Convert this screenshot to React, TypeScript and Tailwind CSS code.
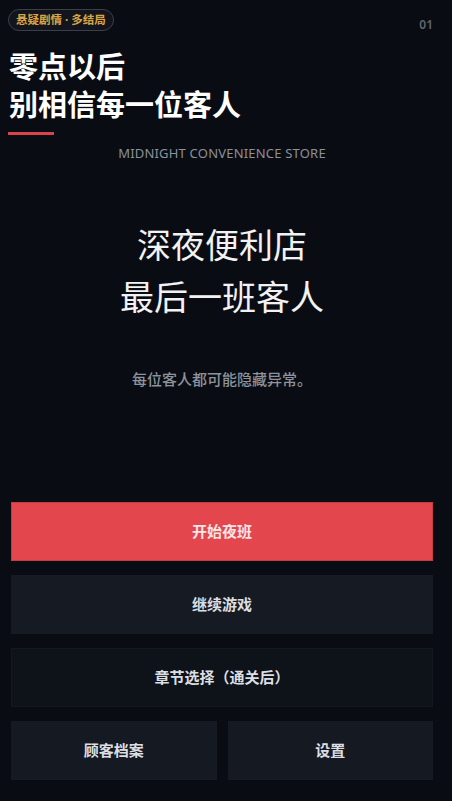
import React from 'react';

const font = { fontFamily: '"Noto Sans", "Noto Sans CJK SC", sans-serif' };

const Btn = ({ label, className }: { label: string; className: string }) => (
  <button className={`h-[59px] w-full flex items-center justify-center text-[15px] font-semibold ${className}`}>
    {label}
  </button>
);

export default function App() {
  return (
    <div style={font} className="w-[452px] h-[801px] bg-[#0a0c13] overflow-hidden flex flex-col pl-[8px] pr-[19px]">
      <div className="flex items-start justify-between pt-[9px]">
        <span className="h-[22px] px-[7px] flex items-center rounded-full border border-[#3b3f48] bg-[#12151d] text-[11.5px] font-bold text-[#d9a544]">
          <span>悬疑剧情</span>
          <span className="mx-[3px]">·</span>
          <span>多结局</span>
        </span>
        <span className="mt-[7px] text-[12px] font-semibold text-[#5f6570]">01</span>
      </div>

      <h1 className="mt-[14px] pl-[1px] text-[29px] leading-[38px] font-bold text-white">
        零点以后<br />别相信每一位客人
      </h1>
      <div className="mt-[8px] w-[46px] h-[3px] bg-[#d9434a]" />

      <p className="mt-[9px] pl-[3px] text-center text-[13px] tracking-[0.2px] text-[#8b919b]">MIDNIGHT CONVENIENCE STORE</p>

      <div className="mt-[55px] pl-[3px] text-center text-[34px] leading-[52px] text-[#f2f2f2]">
        深夜便利店<br />最后一班客人
      </div>

      <p className="mt-[45px] pl-[3px] text-center text-[15px] font-medium text-[#8d939c]">每位客人都可能隐藏异常。</p>

      <div className="mt-[112px] pl-[3px] flex flex-col gap-[14px]">
        <Btn label="开始夜班" className="bg-[#e4464d] border border-[#c93a41] text-[#f6e6e6]" />
        <Btn label="继续游戏" className="bg-[#161b23] text-[#dcdee2]" />
        <Btn label="章节选择（通关后）" className="bg-[#0e1219] border border-[#141921] text-[#dcdee2]" />
        <div className="grid grid-cols-2 gap-[11px]">
          <Btn label="顾客档案" className="bg-[#151a22] text-[#dcdee2]" />
          <Btn label="设置" className="bg-[#151a22] text-[#dcdee2]" />
        </div>
      </div>
    </div>
  );
}
